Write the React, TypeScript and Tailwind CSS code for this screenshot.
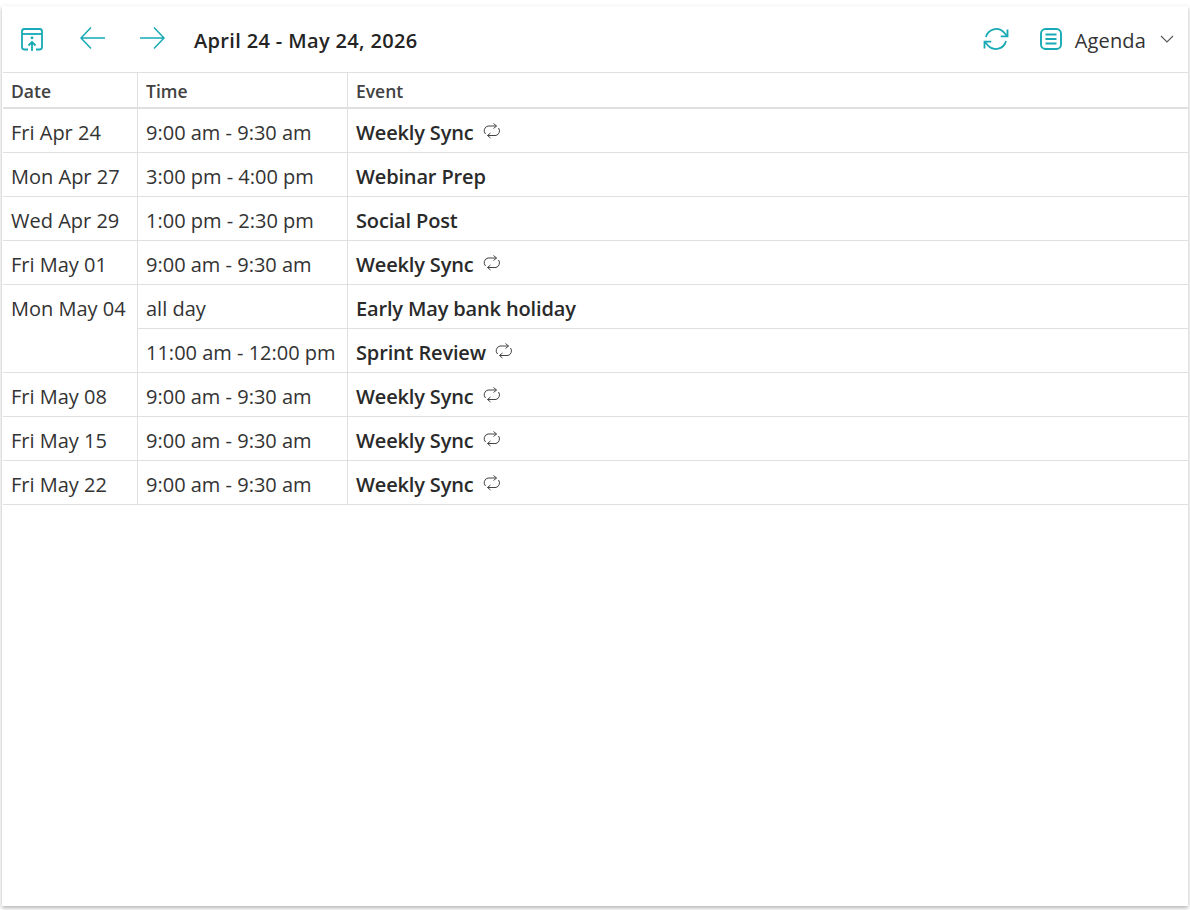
const font = "font-['Open_Sans','Noto_Sans',sans-serif]";

type Row = { date?: string; time: string; title: string; repeat?: boolean; span?: number };

const rows: Row[] = [
  { date: 'Fri Apr 24', time: '9:00 am - 9:30 am', title: 'Weekly Sync', repeat: true },
  { date: 'Mon Apr 27', time: '3:00 pm - 4:00 pm', title: 'Webinar Prep' },
  { date: 'Wed Apr 29', time: '1:00 pm - 2:30 pm', title: 'Social Post' },
  { date: 'Fri May 01', time: '9:00 am - 9:30 am', title: 'Weekly Sync', repeat: true },
  { date: 'Mon May 04', time: 'all day', title: 'Early May bank holiday', span: 2 },
  { time: '11:00 am - 12:00 pm', title: 'Sprint Review', repeat: true },
  { date: 'Fri May 08', time: '9:00 am - 9:30 am', title: 'Weekly Sync', repeat: true },
  { date: 'Fri May 15', time: '9:00 am - 9:30 am', title: 'Weekly Sync', repeat: true },
  { date: 'Fri May 22', time: '9:00 am - 9:30 am', title: 'Weekly Sync', repeat: true },
];

function TodayIcon() {
  return (
    <svg width="24" height="24" viewBox="0 0 24 24" fill="none" stroke="#17a9b5" strokeWidth="1.800">
      <path d="M8 22.500H4.500A2.500 2.500 0 0 1 2 20V4.500A2.500 2.500 0 0 1 4.500 2h15A2.500 2.500 0 0 1 22 4.500V20a2.500 2.500 0 0 1-2.500 2.500H16" />
      <path d="M2 7h20" />
      <path d="M12 24v-8.500M8.500 18.500l3.500-3.500 3.500 3.500" strokeWidth="1.800" />
      <circle cx="12" cy="10.800" r="1.400" fill="#17a9b5" stroke="none" />
    </svg>
  );
}

function ArrowIcon({ right }: { right?: boolean }) {
  return (
    <svg width="26" height="24" viewBox="0 0 26 24" fill="none" stroke="#17a9b5" strokeWidth="1.500">
      {right ? <path d="M1 12h24M15 1.500 25 12 15 22.500" /> : <path d="M25 12H1M11 1.500 1 12l10 10.500" />}
    </svg>
  );
}

function RefreshIcon() {
  return (
    <svg width="26" height="26" viewBox="0 0 26 26" fill="none" stroke="#17a9b5" strokeWidth="1.800">
      <path d="M3 11A10.500 10.500 0 0 1 21 6.500L24 9.800" />
      <path d="M24.500 3.500V10.300H17.700" />
      <path d="M23 15A10.500 10.500 0 0 1 5 19.500L2 16.200" />
      <path d="M1.500 22.500V15.700H8.300" />
    </svg>
  );
}

function AgendaIcon() {
  return (
    <svg width="22" height="22" viewBox="0 0 22 22" fill="none" stroke="#17a9b5" strokeWidth="1.900">
      <rect x="1" y="1" width="20" height="20" rx="4.500" />
      <path d="M5.500 6.500h11M5.500 11h11M5.500 15.500h11" />
    </svg>
  );
}

function RepeatIcon() {
  return (
    <svg width="18" height="16" viewBox="0 0 18 16" fill="none" stroke="#444" strokeWidth="1">
      <path d="M2.500 11A4.800 4.800 0 0 1 5 3H13.500" />
      <path d="M10.500 .5 13.500 3 10.500 5.500" />
      <path d="M15.500 5A4.800 4.800 0 0 1 13 12.500H4.500" />
      <path d="M7.500 10 4.500 12.500 7.500 15" />
    </svg>
  );
}

export default function App() {
  return (
    <div className={`h-[910px] w-[1190px] overflow-hidden bg-white pt-1.5 pb-1 px-0.5 ${font}`}>
      <div className="flex h-full flex-col bg-white shadow-[0_2px_4px_rgba(0,0,0,0.3)]">
        <div className="flex h-[66px] shrink-0 items-center pl-[18px] pr-[14px]">
          <TodayIcon />
          <div className="ml-[36px] -mt-[2px]"><ArrowIcon /></div>
          <div className="ml-[33px] -mt-[2px]"><ArrowIcon right /></div>
          <div className="ml-[29px] pt-1 text-[20px] leading-none font-semibold tracking-[0.35px] text-[#242424]">April 24 - May 24, 2026</div>
          <div className="ml-auto"><RefreshIcon /></div>
          <div className="ml-[31px]"><AgendaIcon /></div>
          <div className="ml-[13px] pt-1 text-[20px] leading-none tracking-[0.15px] text-[#333]">Agenda</div>
          <svg className="ml-[14px]" width="14" height="10" viewBox="0 0 14 10" fill="none" stroke="#555" strokeWidth="1.100">
            <path d="M1 2l6 6 6-6" />
          </svg>
        </div>
        <table className="ml-px w-[1185px] table-fixed border-separate border-spacing-0">
          <colgroup>
            <col className="w-[134px]" />
            <col className="w-[210px]" />
            <col />
          </colgroup>
          <thead>
            <tr className="h-[37px] text-left text-[17.500px] text-[#424242]">
              <th className="border-t border-b-2 border-[#e0e0e0] pl-2 pt-[2px] pb-0 font-semibold">Date</th>
              <th className="border-t border-b-2 border-l border-[#e0e0e0] px-2 pt-[2px] pb-0 font-semibold">Time</th>
              <th className="border-t border-b-2 border-l border-[#e0e0e0] px-2 pt-[2px] pb-0 font-semibold">Event</th>
            </tr>
          </thead>
          <tbody>
            {rows.map((row, i) => (
              <tr key={i} className="h-[44px] text-[20px] leading-none text-[#333]">
                {row.date && (
                  <td rowSpan={row.span} className="border-b border-[#e0e0e0] pl-2 pt-[14px] align-top">{row.date}</td>
                )}
                <td className="border-b border-l border-[#e0e0e0] px-2 pt-[14px] align-top whitespace-nowrap">{row.time}</td>
                <td className="border-b border-l border-[#e0e0e0] px-2 pt-[14px] align-top">
                  <span className="flex items-center gap-[9px] font-semibold tracking-[-0.15px] text-[#2a2a2a]">
                    {row.title}
                    {row.repeat && <span className="-mt-1"><RepeatIcon /></span>}
                  </span>
                </td>
              </tr>
            ))}
          </tbody>
        </table>
      </div>
    </div>
  );
}
